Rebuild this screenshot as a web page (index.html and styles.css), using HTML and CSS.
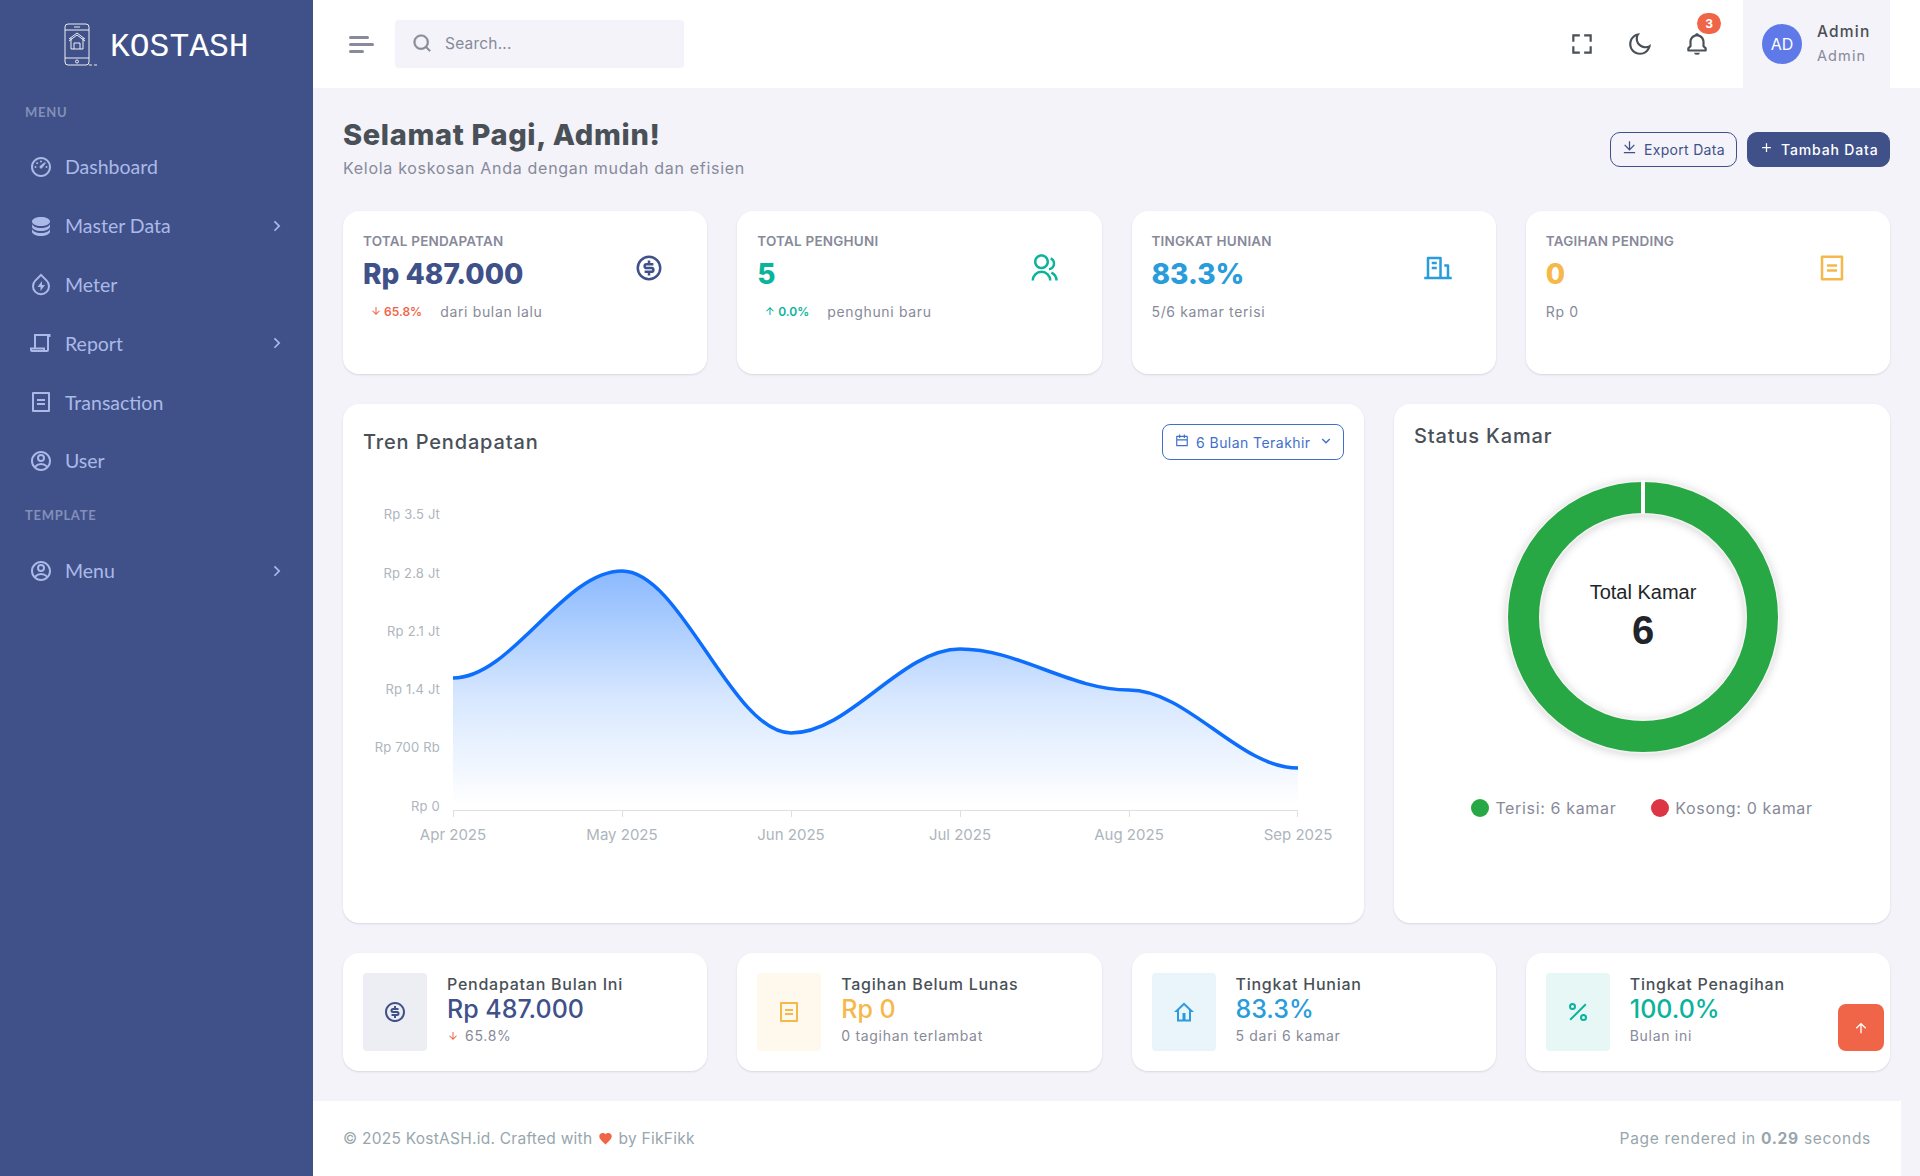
FILE: index.html
```html
<!DOCTYPE html>
<html lang="id">

<head>
    <meta charset="UTF-8" />
    <meta name="viewport" content="width=device-width, initial-scale=1.0" />
    <title>KostASH - Dashboard</title>
    <link rel="stylesheet" href="styles.css">
</head>

<body>
    <!-- icon sprite -->
    <svg class="sprite" xmlns="http://www.w3.org/2000/svg">
        <symbol id="i-gauge" viewBox="0 0 24 24"><path d="M12 2c5.523 0 10 4.477 10 10s-4.477 10-10 10S2 17.523 2 12 6.477 2 12 2zm0 2a8 8 0 1 0 0 16 8 8 0 0 0 0-16zm3.833 3.337a.596.596 0 0 1 .763.067.59.59 0 0 1 .063.76c-2.18 3.046-3.38 4.678-3.598 4.897a1.5 1.5 0 0 1-2.122-2.122c.374-.373 2.005-1.574 4.894-3.602zM17.5 11a1 1 0 0 1 0 2 1 1 0 0 1 0-2zm-11 0a1 1 0 0 1 0 2 1 1 0 0 1 0-2zm2.318-3.596a1 1 0 1 1-1.414 1.414 1 1 0 0 1 1.414-1.414zM12 5.5a1 1 0 1 1 0 2 1 1 0 0 1 0-2z"/></symbol>
        <symbol id="i-database" viewBox="0 0 24 24"><path d="M21 9.5v3c0 2.485-4.03 4.5-9 4.5s-9-2.015-9-4.5v-3c0 2.485 4.03 4.5 9 4.5s9-2.015 9-4.5zm-18 5c0 2.485 4.03 4.5 9 4.5s9-2.015 9-4.5v3c0 2.485-4.03 4.5-9 4.5s-9-2.015-9-4.5v-3zm9-2.5c-4.97 0-9-2.015-9-4.5S7.03 3 12 3s9 2.015 9 4.5-4.03 4.5-9 4.5z"/></symbol>
        <symbol id="i-meter" viewBox="0 0 24 24"><path d="M12 1.500l6.400 6.400a9 9 0 1 1-12.800 0L12 1.500zm0 2.830L7 9.300a7 7 0 1 0 10 0l-5-4.970zM13 9v4h3l-4.500 6v-4H8.500L13 9z"/></symbol>
        <symbol id="i-report" viewBox="0 0 24 24"><path d="M5 3h16.500v3H20v13a2 2 0 0 1-2 2H3a2 2 0 0 1-2-2v-2.500h4V3zm2 2v11.500h9v2.500h2V5H7zM3 18.500v.5h11v-.5H3z"/></symbol>
        <symbol id="i-doc" viewBox="0 0 24 24"><path d="M20 22H4a1 1 0 0 1-1-1V3a1 1 0 0 1 1-1h16a1 1 0 0 1 1 1v18a1 1 0 0 1-1 1zm-1-2V4H5v16h14zM8 9h8v2H8V9zm0 4h8v2H8v-2z"/></symbol>
        <symbol id="i-user" viewBox="0 0 24 24"><path d="M12 22C6.477 22 2 17.523 2 12S6.477 2 12 2s10 4.477 10 10-4.477 10-10 10zm-4.987-3.744A7.966 7.966 0 0 0 12 20c1.97 0 3.773-.712 5.167-1.892A6.979 6.979 0 0 0 12.160 16a6.981 6.981 0 0 0-5.147 2.256zM5.616 16.820A8.975 8.975 0 0 1 12.160 14a8.972 8.972 0 0 1 6.362 2.634 8 8 0 1 0-12.906.187zM12 13a4 4 0 1 1 0-8 4 4 0 0 1 0 8zm0-2a2 2 0 1 0 0-4 2 2 0 0 0 0 4z"/></symbol>
        <symbol id="i-chevron" viewBox="0 0 24 24"><path d="M13.172 12l-4.950-4.950 1.414-1.414L16 12l-6.364 6.364-1.414-1.414z"/></symbol>
        <symbol id="i-chevron-down" viewBox="0 0 24 24"><path d="M12 13.172l4.950-4.950 1.414 1.414L12 16 5.636 9.636 7.050 8.222z"/></symbol>
        <symbol id="i-search" viewBox="0 0 24 24"><path d="M18.031 16.617l4.283 4.282-1.415 1.415-4.282-4.283A8.960 8.960 0 0 1 11 20c-4.968 0-9-4.032-9-9s4.032-9 9-9 9 4.032 9 9a8.960 8.960 0 0 1-1.969 5.617zm-2.006-.742A6.977 6.977 0 0 0 18 11c0-3.868-3.133-7-7-7-3.868 0-7 3.132-7 7 0 3.867 3.132 7 7 7a6.977 6.977 0 0 0 4.875-1.975l.150-.150z"/></symbol>
        <symbol id="i-fullscreen" viewBox="0 0 24 24"><path d="M5 5h5V3H3v7h2zm5 14H5v-5H3v7h7zm11-5h-2v5h-5v2h7zm-2-4h2V3h-7v2h5z"/></symbol>
        <symbol id="i-moon" viewBox="0 0 24 24"><path d="M10 7a7 7 0 0 0 12 4.900v.1c0 5.523-4.477 10-10 10S2 17.523 2 12 6.477 2 12 2h.1A6.979 6.979 0 0 0 10 7zm-6 5a8 8 0 0 0 15.062 3.762A9 9 0 0 1 8.238 4.938 7.999 7.999 0 0 0 4 12z"/></symbol>
        <symbol id="i-bell" viewBox="0 0 24 24"><path d="M19 13.586V10c0-3.217-2.185-5.927-5.145-6.742C13.562 2.520 12.846 2 12 2s-1.562.520-1.855 1.258C7.185 4.074 5 6.783 5 10v3.586l-1.707 1.707A.996.996 0 0 0 3 16v2a1 1 0 0 0 1 1h16a1 1 0 0 0 1-1v-2a.996.996 0 0 0-.293-.707L19 13.586zM19 17H5v-.586l1.707-1.707A.996.996 0 0 0 7 14v-4c0-2.757 2.243-5 5-5s5 2.243 5 5v4c0 .266.105.520.293.707L19 16.414V17zm-7 5a2.980 2.980 0 0 0 2.818-2H9.182A2.980 2.980 0 0 0 12 22z"/></symbol>
        <symbol id="i-download" viewBox="0 0 24 24"><path d="M3 19h18v2H3v-2zm10-5.828L19.071 7.100l1.414 1.414L12 17 3.515 8.515 4.929 7.100 11 13.170V2h2v11.172z"/></symbol>
        <symbol id="i-plus" viewBox="0 0 24 24"><path d="M11 11V5h2v6h6v2h-6v6h-2v-6H5v-2z"/></symbol>
        <symbol id="i-up" viewBox="0 0 24 24"><path d="M13 7.828V20h-2V7.828l-5.364 5.364-1.414-1.414L12 4l7.778 7.778-1.414 1.414L13 7.828z"/></symbol>
        <symbol id="i-down" viewBox="0 0 24 24"><path d="M13 16.172l5.364-5.364 1.414 1.414L12 20l-7.778-7.778 1.414-1.414L11 16.172V4h2v12.172z"/></symbol>
        <symbol id="i-calendar" viewBox="0 0 24 24"><path d="M17 3h4a1 1 0 0 1 1 1v16a1 1 0 0 1-1 1H3a1 1 0 0 1-1-1V4a1 1 0 0 1 1-1h4V1h2v2h6V1h2v2zm-2 2H9v2H7V5H4v4h16V5h-3v2h-2V5zm5 6H4v8h16v-8z"/></symbol>
        <symbol id="i-dollar" viewBox="0 0 24 24"><path d="M12 22C6.477 22 2 17.523 2 12S6.477 2 12 2s10 4.477 10 10-4.477 10-10 10zm0-2a8 8 0 1 0 0-16 8 8 0 0 0 0 16zm-3.500-6H14a.5.5 0 1 0 0-1h-4a2.500 2.500 0 1 1 0-5h1V6h2v2h2.500v2H10a.5.5 0 1 0 0 1h4a2.500 2.500 0 1 1 0 5h-1v2h-2v-2H8.500v-2z"/></symbol>
        <symbol id="i-group" viewBox="0 0 24 24"><path d="M2 22a8 8 0 1 1 16 0h-2a6 6 0 1 0-12 0H2zm8-9c-3.315 0-6-2.685-6-6s2.685-6 6-6 6 2.685 6 6-2.685 6-6 6zm0-2c2.210 0 4-1.790 4-4s-1.790-4-4-4-4 1.790-4 4 1.790 4 4 4zm8.284 3.703A8.002 8.002 0 0 1 23 22h-2a6.001 6.001 0 0 0-3.537-5.473l.820-1.824zm-.688-11.290A5.500 5.500 0 0 1 21 8.500a5.499 5.499 0 0 1-5 5.478v-2.013a3.500 3.500 0 0 0 1.041-6.609l.555-1.943z"/></symbol>
        <symbol id="i-building" viewBox="0 0 24 24"><path d="M21 19h2v2H1v-2h2V4a1 1 0 0 1 1-1h10a1 1 0 0 1 1 1v15h4v-8h-2V9h3a1 1 0 0 1 1 1v9zM5 5v14h8V5H5zm2 6h4v2H7v-2zm0-4h4v2H7V7z"/></symbol>
        <symbol id="i-home" viewBox="0 0 24 24"><path d="M12 2.500l10 9.500h-3v9.500H5V12H2l10-9.500zm0 2.800L7 10v9.500h3.500V13h3v6.500H17V10l-5-4.700z"/></symbol>
        <symbol id="i-percent" viewBox="0 0 24 24"><path d="M17.500 21a3.500 3.500 0 1 1 0-7 3.500 3.500 0 0 1 0 7zm0-2a1.500 1.500 0 1 0 0-3 1.500 1.500 0 0 0 0 3zm-11-9a3.500 3.500 0 1 1 0-7 3.500 3.500 0 0 1 0 7zm0-2a1.500 1.500 0 1 0 0-3 1.500 1.500 0 0 0 0 3zM19.100 3.500l1.400 1.400L4.900 20.500l-1.400-1.400L19.100 3.500z"/></symbol>
        <symbol id="i-heart" viewBox="0 0 24 24"><path d="M12 21.400C6 16.400 2 12.800 2 8.500 2 5.400 4.400 3 7.500 3c1.800 0 3.500.800 4.500 2.200C13 3.800 14.700 3 16.500 3 19.600 3 22 5.400 22 8.500c0 4.300-4 7.900-10 12.900z"/></symbol>
    </svg>

    <div class="app">
        <!-- sidebar -->
        <aside class="sidebar">
            <div class="brand">
                <svg class="brand-icon" viewBox="0 0 34 43" fill="none" stroke="#fff" stroke-width="0.9">
                    <rect x="1" y="1" width="24" height="41" rx="3" />
                    <path d="M1 7h24M1 35h24M10 4h6" />
                    <circle cx="13" cy="38.500" r="1.500" />
                    <path d="M5 16l8-6 8 6M7 15v11h12V15" />
                    <path d="M5 18l8-6 8 6M10 26v-6h6v6" />
                    <path d="M25 42h3M30 42h3" />
                </svg>
                <span class="brand-name">KOSTASH</span>
            </div>

            <div class="menu-title">Menu</div>
            <ul class="nav">
                <li class="nav-item"><svg class="nav-icon"><use href="#i-gauge" /></svg>Dashboard</li>
                <li class="nav-item"><svg class="nav-icon"><use href="#i-database" /></svg>Master Data<svg class="nav-arrow"><use href="#i-chevron" /></svg></li>
                <li class="nav-item"><svg class="nav-icon"><use href="#i-meter" /></svg>Meter</li>
                <li class="nav-item"><svg class="nav-icon"><use href="#i-report" /></svg>Report<svg class="nav-arrow"><use href="#i-chevron" /></svg></li>
                <li class="nav-item"><svg class="nav-icon"><use href="#i-doc" /></svg>Transaction</li>
                <li class="nav-item"><svg class="nav-icon"><use href="#i-user" /></svg>User</li>
            </ul>
            <div class="menu-title menu-title-second">Template</div>
            <ul class="nav">
                <li class="nav-item"><svg class="nav-icon"><use href="#i-user" /></svg>Menu<svg class="nav-arrow"><use href="#i-chevron" /></svg></li>
            </ul>
        </aside>

        <div class="main">
            <!-- topbar -->
            <header class="topbar">
                <div class="hamburger"><span></span><span></span><span></span></div>
                <div class="search">
                    <svg class="search-icon"><use href="#i-search" /></svg>
                    <span>Search...</span>
                </div>
                <div class="topbar-actions">
                    <svg class="top-icon"><use href="#i-fullscreen" /></svg>
                    <svg class="top-icon"><use href="#i-moon" /></svg>
                    <div class="bell">
                        <svg class="top-icon"><use href="#i-bell" /></svg>
                        <span class="bell-badge">3</span>
                    </div>
                </div>
                <div class="user-box">
                    <div class="avatar">AD</div>
                    <div>
                        <div class="user-name">Admin</div>
                        <div class="user-role">Admin</div>
                    </div>
                </div>
            </header>

            <main class="content">
                <div class="page-head">
                    <div>
                        <h1 class="page-title">Selamat Pagi, Admin!</h1>
                        <p class="page-sub">Kelola koskosan Anda dengan mudah dan efisien</p>
                    </div>
                    <div class="page-actions">
                        <button class="btn btn-outline"><svg class="btn-icon"><use href="#i-download" /></svg>Export Data</button>
                        <button class="btn btn-primary"><svg class="btn-icon"><use href="#i-plus" /></svg>Tambah Data</button>
                    </div>
                </div>

                <!-- stat cards -->
                <section class="four-cols">
                    <div class="card stat-card">
                        <div>
                            <div class="stat-label">TOTAL PENDAPATAN</div>
                            <div class="stat-value text-primary">Rp 487.000</div>
                            <div class="stat-note">
                                <span class="delta text-red"><svg class="delta-icon"><use href="#i-down" /></svg>65.8%</span>
                                dari bulan lalu
                            </div>
                        </div>
                        <svg class="stat-icon text-primary"><use href="#i-dollar" /></svg>
                    </div>
                    <div class="card stat-card">
                        <div>
                            <div class="stat-label">TOTAL PENGHUNI</div>
                            <div class="stat-value text-teal">5</div>
                            <div class="stat-note">
                                <span class="delta text-teal"><svg class="delta-icon"><use href="#i-up" /></svg>0.0%</span>
                                penghuni baru
                            </div>
                        </div>
                        <svg class="stat-icon text-teal"><use href="#i-group" /></svg>
                    </div>
                    <div class="card stat-card">
                        <div>
                            <div class="stat-label">TINGKAT HUNIAN</div>
                            <div class="stat-value text-blue">83.3%</div>
                            <div class="stat-note stat-note-plain">5/6 kamar terisi</div>
                        </div>
                        <svg class="stat-icon text-blue"><use href="#i-building" /></svg>
                    </div>
                    <div class="card stat-card">
                        <div>
                            <div class="stat-label">TAGIHAN PENDING</div>
                            <div class="stat-value text-yellow">0</div>
                            <div class="stat-note stat-note-plain">Rp 0</div>
                        </div>
                        <svg class="stat-icon text-yellow"><use href="#i-doc" /></svg>
                    </div>
                </section>

                <!-- charts -->
                <section class="chart-row">
                    <div class="card chart-card">
                        <div class="chart-head">
                            <h2 class="card-title">Tren Pendapatan</h2>
                            <div class="range-select">
                                <svg class="range-icon"><use href="#i-calendar" /></svg>
                                6 Bulan Terakhir
                                <svg class="range-icon range-caret"><use href="#i-chevron-down" /></svg>
                            </div>
                        </div>
                        <svg class="trend-chart" viewBox="363 480 980 423">
                            <defs>
                                <linearGradient id="trend-fill" gradientUnits="userSpaceOnUse" x1="0" y1="571" x2="0" y2="805">
                                    <stop offset="0" stop-color="#0d6efd" stop-opacity="0.48" />
                                    <stop offset="0.55" stop-color="#0d6efd" stop-opacity="0.16" />
                                    <stop offset="1" stop-color="#0d6efd" stop-opacity="0" />
                                </linearGradient>
                            </defs>
                            <g class="y-labels">
                                <text x="440" y="519">Rp 3.5 Jt</text>
                                <text x="440" y="578">Rp 2.8 Jt</text>
                                <text x="440" y="636">Rp 2.1 Jt</text>
                                <text x="440" y="694">Rp 1.4 Jt</text>
                                <text x="440" y="752">Rp 700 Rb</text>
                                <text x="440" y="811">Rp 0</text>
                            </g>
                            <path d="M453 678C512 678 563 571 622 571C681 571 732 733 791 733C850 733 901 649 960 649C1019 649 1070 690 1129 690C1188 690 1239 768 1298 768L1298 810L453 810Z" fill="url(#trend-fill)" />
                            <path d="M453 678C512 678 563 571 622 571C681 571 732 733 791 733C850 733 901 649 960 649C1019 649 1070 690 1129 690C1188 690 1239 768 1298 768" fill="none" stroke="#0d6efd" stroke-width="3.500" />
                            <path class="axis" d="M453 810.500H1298M453.500 810V817M622.500 810V817M791.500 810V817M960.500 810V817M1129.500 810V817M1297.500 810V817" />
                            <g class="x-labels">
                                <text x="453" y="840">Apr 2025</text>
                                <text x="622" y="840">May 2025</text>
                                <text x="791" y="840">Jun 2025</text>
                                <text x="960" y="840">Jul 2025</text>
                                <text x="1129" y="840">Aug 2025</text>
                                <text x="1298" y="840">Sep 2025</text>
                            </g>
                        </svg>
                    </div>

                    <div class="card status-card">
                        <h2 class="card-title">Status Kamar</h2>
                        <svg class="donut" viewBox="1414 470 456 300">
                            <circle class="donut-ring" cx="1643" cy="617" r="119.500" />
                            <rect x="1641" y="480" width="4" height="34" fill="#fff" />
                            <text class="donut-label" x="1643" y="599">Total Kamar</text>
                            <text class="donut-total" x="1643" y="644">6</text>
                        </svg>
                        <div class="legend">
                            <span class="legend-item"><i class="dot dot-green"></i>Terisi: 6 kamar</span>
                            <span class="legend-item"><i class="dot dot-red"></i>Kosong: 0 kamar</span>
                        </div>
                    </div>
                </section>

                <!-- bottom summary -->
                <section class="four-cols">
                    <div class="card mini-card">
                        <div class="mini-icon soft-primary"><svg class="text-primary"><use href="#i-dollar" /></svg></div>
                        <div>
                            <div class="mini-title">Pendapatan Bulan Ini</div>
                            <div class="mini-value text-primary">Rp 487.000</div>
                            <div class="mini-sub"><svg class="delta-icon text-red"><use href="#i-down" /></svg>65.8%</div>
                        </div>
                    </div>
                    <div class="card mini-card">
                        <div class="mini-icon soft-yellow"><svg class="text-yellow"><use href="#i-doc" /></svg></div>
                        <div>
                            <div class="mini-title">Tagihan Belum Lunas</div>
                            <div class="mini-value text-yellow">Rp 0</div>
                            <div class="mini-sub">0 tagihan terlambat</div>
                        </div>
                    </div>
                    <div class="card mini-card">
                        <div class="mini-icon soft-blue"><svg class="text-blue"><use href="#i-home" /></svg></div>
                        <div>
                            <div class="mini-title">Tingkat Hunian</div>
                            <div class="mini-value text-blue">83.3%</div>
                            <div class="mini-sub">5 dari 6 kamar</div>
                        </div>
                    </div>
                    <div class="card mini-card">
                        <div class="mini-icon soft-teal"><svg class="text-teal"><use href="#i-percent" /></svg></div>
                        <div>
                            <div class="mini-title">Tingkat Penagihan</div>
                            <div class="mini-value text-teal">100.0%</div>
                            <div class="mini-sub">Bulan ini</div>
                        </div>
                    </div>
                </section>
            </main>

            <footer class="footer">
                <span>© 2025 KostASH.id. Crafted with <svg class="heart"><use href="#i-heart" /></svg> by FikFikk</span>
                <span class="footer-right">Page rendered in <strong>0.29</strong> seconds</span>
            </footer>
        </div>
    </div>

    <button class="back-top"><svg><use href="#i-up" /></svg></button>
</body>

</html>
```

FILE: styles.css
```css
* {
    box-sizing: border-box;
}

html,
body {
    margin: 0;
    height: 100%;
}

body {
    background: #f3f3f9;
    color: #495057;
    font-family: Inter, "Noto Sans", sans-serif;
    overflow: hidden;
}

svg {
    fill: currentColor;
}

.sprite {
    display: none;
}

.app {
    display: flex;
    min-height: 1176px;
}

/* sidebar */
.sidebar {
    flex: 0 0 313px;
    background: #405189;
    color: #abb9e8;
    font-family: Lato, sans-serif;
}

.brand {
    display: flex;
    align-items: center;
    height: 88px;
    padding-left: 64px;
}

.brand-icon {
    width: 34px;
    height: 43px;
    fill: none;
}

.brand-name {
    margin: 6px 0 0 12px;
    color: #fff;
    font-family: "Liberation Mono", monospace;
    font-size: 33px;
}

.menu-title {
    height: 49.500px;
    padding: 16px 25px 0;
    color: #838fb9;
    font-size: 13px;
    font-weight: 700;
    letter-spacing: 0.7px;
    text-transform: uppercase;
}

.menu-title-second {
    height: 51px;
    padding-top: 17px;
}

.nav {
    margin: 0;
    padding: 0;
    list-style: none;
}

.nav-item {
    display: flex;
    align-items: center;
    height: 58.800px;
    padding: 0 26px 0 29px;
    font-size: 19.500px;
}

.nav-icon {
    width: 24px;
    height: 24px;
    margin-right: 12px;
}

.nav-arrow {
    width: 20px;
    height: 20px;
    margin-left: auto;
}

/* topbar */
.main {
    flex: 1;
    display: flex;
    flex-direction: column;
    min-width: 0;
}

.topbar {
    display: flex;
    align-items: center;
    height: 88px;
    padding: 0 30px 0 36px;
    background: #fff;
}

.hamburger {
    display: flex;
    flex-direction: column;
    gap: 4px;
    width: 25px;
    margin-right: 21px;
}

.hamburger span {
    height: 3px;
    border-radius: 2px;
    background: #878a99;
}

.hamburger span:nth-child(1) {
    width: 20px;
}

.hamburger span:nth-child(3) {
    width: 15px;
}

.search {
    display: flex;
    align-items: center;
    width: 289px;
    height: 48px;
    padding: 0 0 2px 17px;
    border-radius: 4px;
    background: #f3f3f9;
    color: #878a99;
    font-size: 15.500px;
    letter-spacing: 0.2px;
}

.search-icon {
    width: 20px;
    height: 20px;
    margin-right: 13px;
    stroke: currentColor;
    stroke-width: 0.6px;
}

.topbar-actions {
    display: flex;
    align-items: center;
    gap: 31.500px;
    margin-left: auto;
    margin-right: 33px;
    color: #495057;
}

.top-icon {
    display: block;
    width: 26px;
    height: 26px;
}

.bell {
    position: relative;
}

.bell-badge {
    position: absolute;
    top: -18px;
    left: 13px;
    width: 24px;
    height: 21px;
    border-radius: 11px;
    background: #f06548;
    color: #fff;
    font-size: 12px;
    font-weight: 700;
    line-height: 21px;
    text-align: center;
}

.user-box {
    display: flex;
    align-items: center;
    align-self: stretch;
    flex: 0 0 147px;
    padding-left: 19px;
    background: #f3f3f9;
}

.avatar {
    width: 40px;
    height: 40px;
    margin-right: 15px;
    border-radius: 50%;
    background: #5f7ae8;
    color: #fff;
    font-size: 16px;
    line-height: 40px;
    text-align: center;
}

.user-name {
    font-size: 15.500px;
    font-weight: 500;
    line-height: 24px;
    letter-spacing: 1.2px;
}

.user-role {
    color: #878a99;
    font-size: 14.500px;
    line-height: 24px;
    letter-spacing: 1.1px;
}

/* content */
.content {
    flex: 1;
    display: flex;
    flex-direction: column;
    gap: 30px;
    padding: 30px;
}

.page-head {
    display: flex;
    align-items: flex-end;
    justify-content: space-between;
    height: 63px;
}

.page-title {
    margin: 0;
    font-size: 29px;
    font-weight: 800;
    line-height: 33px;
    letter-spacing: 0.65px;
}

.page-sub {
    margin: 6px 0 2px;
    color: #878a99;
    font-size: 16px;
    line-height: 22px;
    letter-spacing: 0.7px;
}

.page-actions {
    display: flex;
    gap: 10px;
    margin-bottom: 14px;
}

.btn {
    display: flex;
    align-items: center;
    height: 35px;
    padding: 0 10px;
    border: 1px solid #405189;
    border-radius: 10px;
    font-family: inherit;
    font-size: 14px;
    letter-spacing: 0.3px;
    white-space: nowrap;
}

.btn-outline {
    width: 127px;
    background: transparent;
    color: #405189;
}

.btn-primary {
    width: 143px;
    background: #405189;
    color: #fff;
    font-weight: 500;
    letter-spacing: 0.85px;
}

.btn-icon {
    width: 15px;
    height: 15px;
    margin: -4px 7px 0 1px;
}

.four-cols {
    display: grid;
    grid-template-columns: repeat(4, 1fr);
    gap: 30px;
}

.card {
    border-radius: 16px;
    background: #fff;
    box-shadow: 0 1px 2px rgba(56, 65, 74, 0.15);
}

/* stat cards */
.stat-card {
    display: flex;
    justify-content: space-between;
    align-items: flex-start;
    height: 163px;
    padding: 20px 43px 20px 20px;
}

.stat-label {
    color: #878a99;
    font-size: 13.500px;
    font-weight: 600;
    line-height: 20px;
    letter-spacing: 0.2px;
}

.stat-value {
    margin-top: 3px;
    font-size: 28px;
    font-weight: 800;
    line-height: 40px;
}

.stat-note {
    display: flex;
    align-items: center;
    margin-top: 7px;
    padding-left: 7px;
    color: #878a99;
    font-size: 14px;
    line-height: 22px;
    letter-spacing: 0.65px;
}

.stat-note-plain {
    margin-top: 7px;
    padding-left: 0;
}

.delta {
    display: inline-flex;
    align-items: center;
    margin-right: 18px;
    font-size: 12px;
    font-weight: 600;
    letter-spacing: 0;
}

.delta-icon {
    width: 12px;
    height: 12px;
    margin: -2px 2px 0 0;
    vertical-align: middle;
}

.stat-icon {
    width: 30px;
    height: 30px;
    margin-top: 22px;
}

.text-primary {
    color: #405189;
}

.text-teal {
    color: #0ab39c;
}

.text-blue {
    color: #299cdb;
}

.text-yellow {
    color: #f7b84b;
}

.text-red {
    color: #f06548;
}

/* charts */
.chart-row {
    display: grid;
    grid-template-columns: 1fr 496px;
    gap: 30px;
    height: 519px;
}

.chart-card,
.status-card {
    padding: 20px;
}

.chart-head {
    display: flex;
    align-items: center;
    justify-content: space-between;
    height: 36px;
    margin-bottom: 20px;
}

.card-title {
    margin: 0;
    color: #495057;
    font-size: 20px;
    font-weight: 500;
    line-height: 24px;
    letter-spacing: 0.85px;
}

.range-select {
    display: flex;
    align-items: center;
    width: 182px;
    height: 36px;
    padding-left: 12px;
    border: 1px solid #3f6fc9;
    border-radius: 8px;
    color: #3f6fc9;
    font-size: 14px;
    letter-spacing: 0.45px;
    white-space: nowrap;
}

.range-icon {
    width: 14px;
    height: 14px;
    margin: -3px 7px 0 0;
}

.range-caret {
    margin: -3px 0 0 7px;
    width: 16px;
    height: 16px;
}

.trend-chart {
    display: block;
    width: 980px;
    height: 423px;
}

.trend-chart text {
    font-family: Inter, sans-serif;
}

.y-labels text {
    fill: #adb5bd;
    font-size: 13px;
    letter-spacing: 0.2px;
    text-anchor: end;
}

.x-labels text {
    fill: #adb5bd;
    font-size: 15px;
    text-anchor: middle;
}

.axis {
    fill: none;
    stroke: #e0e0e0;
    stroke-width: 1;
}

.donut {
    display: block;
    width: 456px;
    height: 300px;
    margin-top: 22px;
}

.donut-ring {
    fill: none;
    stroke: #28a745;
    stroke-width: 31;
    filter: drop-shadow(0 0 1.500px #fff) drop-shadow(0 0 1.500px #fff) drop-shadow(0 1px 4px rgba(0, 0, 0, 0.22));
}

.donut-label {
    fill: #212529;
    font-family: "Liberation Sans", sans-serif;
    font-size: 20px;
    text-anchor: middle;
}

.donut-total {
    fill: #212529;
    font-family: "Liberation Sans", sans-serif;
    font-size: 40px;
    font-weight: 700;
    text-anchor: middle;
}

.legend {
    display: flex;
    justify-content: center;
    gap: 35px;
    margin-top: 27px;
    color: #878a99;
    font-size: 16px;
    line-height: 22px;
    letter-spacing: 0.65px;
}

.legend-item {
    display: flex;
    align-items: center;
}

.dot {
    width: 18px;
    height: 18px;
    margin-right: 6px;
    border-radius: 50%;
}

.dot-green {
    background: #28a745;
}

.dot-red {
    background: #dc3545;
}

/* bottom cards */
.mini-card {
    display: flex;
    gap: 20px;
    height: 118px;
    padding: 20px;
}

.mini-icon {
    display: flex;
    flex: 0 0 64px;
    align-items: center;
    justify-content: center;
    border-radius: 4px;
}

.mini-icon svg {
    width: 24px;
    height: 24px;
}

.soft-primary {
    background: #eceef3;
}

.soft-yellow {
    background: #fef8ed;
}

.soft-blue {
    background: #e9f5fb;
}

.soft-teal {
    background: #e6f7f5;
}

.mini-title {
    margin-top: 1px;
    font-size: 16px;
    font-weight: 500;
    line-height: 20px;
    letter-spacing: 0.75px;
}

.mini-value {
    font-size: 25px;
    font-weight: 500;
    line-height: 30px;
}

.mini-sub {
    margin-top: 1px;
    color: #878a99;
    font-size: 14px;
    line-height: 22px;
    letter-spacing: 0.7px;
}

.mini-sub .delta-icon {
    margin-right: 6px;
}

/* footer */
.footer {
    display: flex;
    align-items: center;
    justify-content: space-between;
    width: 1588px;
    height: 75px;
    padding: 0 30px;
    background: #fff;
    color: #98a6ad;
    font-size: 15.500px;
    letter-spacing: 0.25px;
}

.footer-right {
    letter-spacing: 0.7px;
}

.heart {
    width: 15px;
    height: 15px;
    margin: 0 1px;
    color: #f06548;
    vertical-align: -2px;
}

.back-top {
    position: fixed;
    right: 36px;
    bottom: 125px;
    width: 46px;
    height: 47px;
    padding: 0;
    border: 0;
    border-radius: 8px;
    background: #f06548;
    color: #fff;
}

.back-top svg {
    width: 16px;
    height: 16px;
    vertical-align: middle;
}
```
